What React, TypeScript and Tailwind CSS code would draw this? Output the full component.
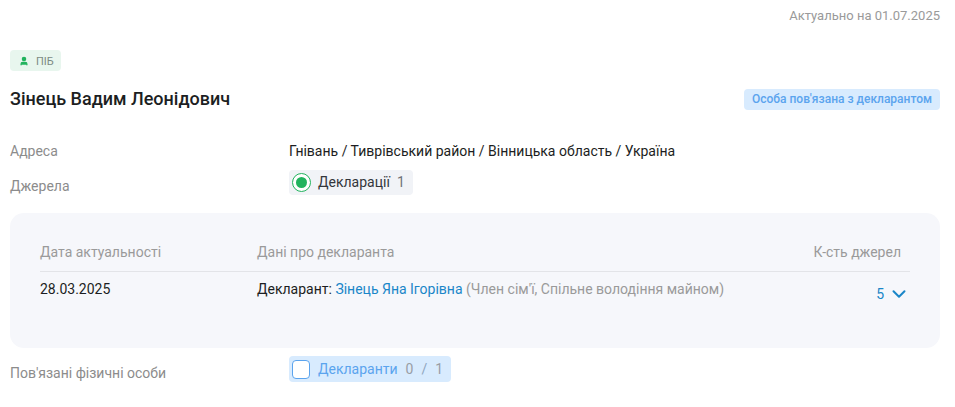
import { ChevronDown, User } from "lucide-react";

const font = "font-['Roboto',sans-serif]";

export default function App() {
  return (
    <div className={`w-[955px] h-[407px] overflow-hidden bg-white pl-[10px] pr-[15px] pt-[7px] ${font}`}>
      <div className="text-right text-[13px] leading-[17px] text-[#9a9a9a]">Актуально на 01.07.2025</div>

      <div className="mt-[26px] flex">
        <div className="flex h-[21px] w-[51px] items-center gap-[7px] rounded-[4px] bg-[#e8f6ee] pl-[9px]">
          <User size={10} strokeWidth={3} className="text-[#22b35e]" fill="#22b35e" />
          <span className="pt-px text-[11px] leading-none text-[#7c8a83]">ПІБ</span>
        </div>
      </div>

      <div className="mt-[15px] flex items-center justify-between">
        <h1 className="text-[18px] leading-[26px] font-medium text-[#1c1e22]">Зінець Вадим Леонідович</h1>
        <span className="flex h-[21px] items-center rounded-[4px] bg-[#d8ebfe] px-[8px] text-[12px] font-medium text-[#5ba4ee]">
          Особа пов'язана з декларантом
        </span>
      </div>

      <div className="mt-[29px] flex items-center">
        <div className="w-[279px] text-[14px] leading-[20px] text-[#8c8c8c]">Адреса</div>
        <div className="text-[14px] leading-[20px] text-[#1c1e22]">Гнівань / Тиврівський район / Вінницька область / Україна</div>
      </div>

      <div className="mt-[9px] flex items-start">
        <div className="w-[279px] pt-[6px] text-[14px] leading-[20px] text-[#8c8c8c]">Джерела</div>
        <div className="flex h-[25px] w-[124px] items-center rounded-[4px] bg-[#f1f3f7] pl-[3px] text-[14px]">
          <span className="flex h-[19px] w-[19px] items-center justify-center rounded-full border border-[#22b35e] bg-white">
            <span className="h-[11px] w-[11px] rounded-full bg-[#22b35e]" />
          </span>
          <span className="ml-[7px] text-[#33363b]">Декларації</span>
          <span className="ml-[7px] text-[#6f7378]">1</span>
        </div>
      </div>

      <div className="mt-[17px] h-[135px] rounded-[14px] bg-[#f6f7fb] pl-[30px] pr-[30px] pt-[28px]">
        <div className="flex h-[31px] border-b border-[#e3e4e8] text-[14px] leading-[22px] text-[#9a9a9a]">
          <div className="w-[217px]">Дата актуальності</div>
          <div className="flex-1">Дані про декларанта</div>
          <div className="pr-[9px]">К-сть джерел</div>
        </div>
        <div className="flex text-[14px] leading-[20px]">
          <div className="w-[217px] pt-[7px] text-[#1c1e22]">28.03.2025</div>
          <div className="flex-1 pt-[7px] text-[#1c1e22]">
            Декларант: <span className="text-[#1a86c8]">Зінець Яна Ігорівна</span>{" "}
            <span className="text-[#9a9a9a]">(Член сім'ї, Спільне володіння майном)</span>
          </div>
          <div className="flex items-center gap-[4px] pt-[11px] text-[#1a86c8] self-start">
            <span>5</span>
            <ChevronDown size={22} strokeWidth={2.2} />
          </div>
        </div>
      </div>

      <div className="mt-[8px] flex items-start">
        <div className="w-[279px] pt-[7px] text-[14px] leading-[20px] text-[#8c8c8c]">Пов'язані фізичні особи</div>
        <div className="flex h-[26px] w-[162px] items-center rounded-[4px] bg-[#d8ebfe] pl-[3px] text-[14px]">
          <span className="h-[19px] w-[18px] rounded-[4px] border border-[#5ba4ee] bg-white" />
          <span className="ml-[8px] text-[#5ba4ee]">Декларанти</span>
          <span className="ml-[8px] text-[#999ea5]">0</span>
          <span className="ml-[8px] text-[#8fa6bf]">/</span>
          <span className="ml-[8px] text-[#999ea5]">1</span>
        </div>
      </div>
    </div>
  );
}
